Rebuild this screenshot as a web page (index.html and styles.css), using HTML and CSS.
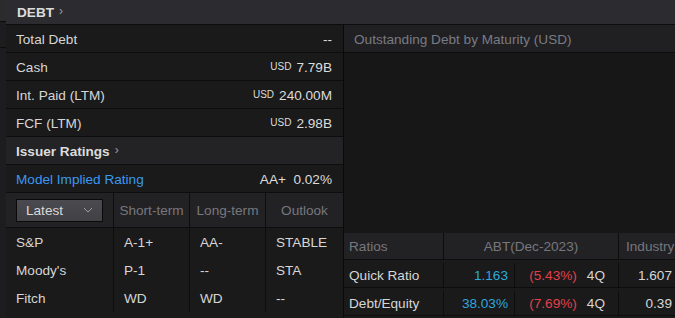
FILE: index.html
```html
<!DOCTYPE html>
<html>
<head>
<meta charset="utf-8">
<link rel="stylesheet" href="styles.css">
</head>
<body>
<div class="page">
  <div class="strip">
    <div class="strip-a"></div>
    <div class="strip-b"></div>
    <div class="strip-c"></div>
  </div>
  <div class="panel">
    <div class="topbar"><span class="title">DEBT</span><span class="chev">›</span></div>
    <div class="main">
      <div class="left">
        <div class="row"><span class="lbl">Total Debt</span><span class="val">--</span></div>
        <div class="row"><span class="lbl">Cash</span><span class="val"><span class="cur">USD</span>7.79B</span></div>
        <div class="row"><span class="lbl">Int. Paid (LTM)</span><span class="val"><span class="cur">USD</span>240.00M</span></div>
        <div class="row"><span class="lbl">FCF (LTM)</span><span class="val"><span class="cur">USD</span>2.98B</span></div>
        <div class="row sub"><span class="title">Issuer Ratings</span><span class="chev">›</span></div>
        <div class="row"><span class="lbl link">Model Implied Rating</span><span class="val">AA+&nbsp;&nbsp;0.02%</span></div>
        <div class="rt">
          <div class="rt-head">
            <div class="c0"><div class="dd"><span>Latest</span><svg width="10" height="6" viewBox="0 0 10 6"><path d="M1 1l4 4 4-4" fill="none" stroke="#9a9aa0" stroke-width="1"/></svg></div></div>
            <div class="c1 h">Short-term</div>
            <div class="c2 h">Long-term</div>
            <div class="c3 h">Outlook</div>
          </div>
          <div class="rt-row"><div class="c0">S&amp;P</div><div class="c1">A-1+</div><div class="c2">AA-</div><div class="c3">STABLE</div></div>
          <div class="rt-row"><div class="c0">Moody's</div><div class="c1">P-1</div><div class="c2">--</div><div class="c3">STA</div></div>
          <div class="rt-row"><div class="c0">Fitch</div><div class="c1">WD</div><div class="c2">WD</div><div class="c3">--</div></div>
        </div>
      </div>
      <div class="right">
        <div class="chart-title">Outstanding Debt by Maturity (USD)</div>
        <div class="chart"></div>
        <div class="ratios">
          <div class="r-head">
            <div class="k">Ratios</div>
            <div class="abt">ABT(Dec-2023)</div>
            <div class="ind">Industry</div>
          </div>
          <div class="r-row">
            <div class="k">Quick Ratio</div>
            <div class="v blue">1.163</div>
            <div class="chg"><span class="red">(5.43%)</span><span>4Q</span></div>
            <div class="ind num">1.607</div>
          </div>
          <div class="r-row">
            <div class="k">Debt/Equity</div>
            <div class="v blue">38.03%</div>
            <div class="chg"><span class="red">(7.69%)</span><span>4Q</span></div>
            <div class="ind num">0.39</div>
          </div>
        </div>
      </div>
    </div>
  </div>
</div>
</body>
</html>
```

FILE: styles.css
```css
* { box-sizing: border-box; }
html, body { margin: 0; padding: 0; }
body {
  background: #141414;
  font-family: "Liberation Sans", Arial, sans-serif;
  font-size: 13.6px;
  color: #d6d6d6;
  width: 675px;
  height: 318px;
  overflow: hidden;
}
.page { display: flex; height: 318px; }
.strip { width: 6px; display: flex; flex-direction: column; background: #1d1d1f; }
.strip-a { height: 22px; background: #2b2b2e; border-bottom: 1px solid #0c0c0c; }
.strip-b { height: 26px; border-bottom: 1px solid #0c0c0c; }
.strip-c { flex: 1; }
.panel { flex: 1; display: flex; flex-direction: column; min-width: 0; }
.topbar {
  height: 25px;
  background: #2c2c30;
  border-bottom: 1px solid #0d0d0d;
  display: flex;
  align-items: center;
  padding-left: 11px;
}
.title { font-weight: bold; color: #dcdcdc; }
.chev { color: #9a9aa0; font-size: 12px; margin-left: 5px; position: relative; top: -1px; }
.main { flex: 1; display: flex; min-height: 0; }
.left { width: 337px; background: #1a1a1a; display: flex; flex-direction: column; }
.row {
  height: 28px;
  border-bottom: 1px solid #0d0d0d;
  display: flex;
  align-items: center;
  justify-content: space-between;
  padding: 1px 11px 0 10px;
  flex-shrink: 0;
}
.row.sub { background: #232326; justify-content: flex-start; }
.lbl { color: #d6d6d6; }
.link { color: #3b98f0; }
.val { color: #dcdcdc; display: flex; align-items: baseline; }
.cur { font-size: 10px; margin-right: 5px; position: relative; top: -2px; }
.rt { display: flex; flex-direction: column; }
.rt-head {
  display: flex;
  height: 35px;
  background: #222225;
  border-bottom: 1px solid #0d0d0d;
}
.rt-head > div, .rt-row > div { display: flex; align-items: center; }
.c0 { width: 107px; padding-left: 10px; }
.c1 { width: 76px; border-left: 1px solid #0d0d0d; padding-left: 10px; }
.c2 { width: 76px; border-left: 1px solid #0d0d0d; padding-left: 10px; }
.c3 { flex: 1; border-left: 1px solid #0d0d0d; padding-left: 10px; }
.h { justify-content: center; padding-left: 0 !important; color: #77777d; }
.dd {
  width: 87px;
  height: 23px;
  border: 1px solid #0a0a0a;
  background: linear-gradient(#4a4a50, #404045);
  display: flex;
  align-items: center;
  justify-content: space-between;
  padding: 0 9px 0 9px;
  color: #d8d8d8;
}
.rt-row { display: flex; height: 28px; }
.rt-row > div { color: #d6d6d6; }
.right {
  flex: 1;
  border-left: 1px solid #0a0a0a;
  background: #171717;
  display: flex;
  flex-direction: column;
  min-width: 0;
}
.chart-title {
  height: 28px;
  background: #202023;
  border-bottom: 1px solid #0d0d0d;
  display: flex;
  align-items: center;
  padding: 1px 0 0 10px;
  color: #787b84;
  flex-shrink: 0;
}
.chart { height: 180px; flex-shrink: 0; }
.ratios { background: #1a1a1a; flex: 1; width: 360px; }
.r-head, .r-row { display: flex; height: 28px; border-bottom: 1px solid #0d0d0d; }
.r-head { background: #222225; height: 27px; }
.r-row { padding-top: 3px; }
.r-head > div, .r-row > div { display: flex; align-items: center; }
.r-head > div { color: #77777d; }
.k { width: 99px; padding-left: 5px; }
.r-row .k { color: #d6d6d6; }
.abt { width: 175px; border-left: 1px solid #0d0d0d; justify-content: center; }
.v { width: 71px; border-left: 1px solid #0d0d0d; justify-content: flex-end; padding-right: 6px; }
.chg { width: 104px; border-left: 1px solid #0d0d0d; justify-content: flex-end; padding-right: 13px; gap: 10px; color: #d6d6d6; }
.ind { flex: 1; border-left: 1px solid #0d0d0d; padding-left: 7px; }
.ind.num { justify-content: flex-end; padding-right: 32px; color: #d6d6d6; }
.blue { color: #2ea7dd; }
.red { color: #e2404b; }
```
